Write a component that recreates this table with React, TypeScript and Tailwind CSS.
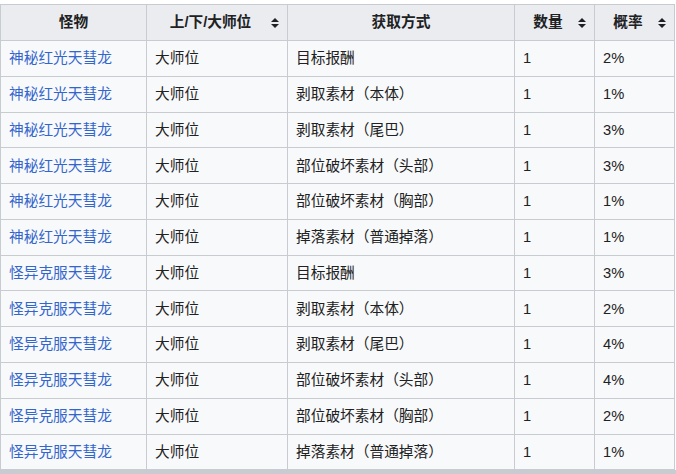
const rows: [string, string, string, string][] = [
  ["神秘红光天彗龙", "目标报酬", "1", "2%"],
  ["神秘红光天彗龙", "剥取素材（本体）", "1", "1%"],
  ["神秘红光天彗龙", "剥取素材（尾巴）", "1", "3%"],
  ["神秘红光天彗龙", "部位破坏素材（头部）", "1", "3%"],
  ["神秘红光天彗龙", "部位破坏素材（胸部）", "1", "1%"],
  ["神秘红光天彗龙", "掉落素材（普通掉落）", "1", "1%"],
  ["怪异克服天彗龙", "目标报酬", "1", "3%"],
  ["怪异克服天彗龙", "剥取素材（本体）", "1", "2%"],
  ["怪异克服天彗龙", "剥取素材（尾巴）", "1", "4%"],
  ["怪异克服天彗龙", "部位破坏素材（头部）", "1", "4%"],
  ["怪异克服天彗龙", "部位破坏素材（胸部）", "1", "2%"],
  ["怪异克服天彗龙", "掉落素材（普通掉落）", "1", "1%"],
];

function SortIcon() {
  return (
    <svg width="8" height="10" viewBox="0 0 8 10" className="absolute right-[8px] top-1/2 -translate-y-1/2">
      <path d="M4 0 L8 4 L0 4 Z" fill="#202122" />
      <path d="M0 6 L8 6 L4 10 Z" fill="#202122" />
    </svg>
  );
}

const th = "relative border border-[#c8ccd1] bg-[#eaecf0] font-bold text-center h-[36px] py-0";
const td = "border border-[#c8ccd1] px-[8px] py-[6.2px] leading-[22.4px] align-middle";

export default function App() {
  return (
    <div
      className="w-[676px] h-[474px] overflow-hidden bg-white pt-[4px] text-[14.7px] text-[#202122]"
      style={{ fontFamily: '"Liberation Sans", "Noto Sans CJK SC", sans-serif' }}
    >
      <table className="table-fixed border-collapse bg-[#f8f9fa] w-[675px]">
        <colgroup>
          <col className="w-[146px]" />
          <col className="w-[141px]" />
          <col className="w-[227px]" />
          <col className="w-[80px]" />
          <col className="w-[80px]" />
        </colgroup>
        <thead>
          <tr>
            <th className={`${th} px-[8px]`}>怪物</th>
            <th className={`${th} pl-[8px] pr-[21px]`}>
              上/下/大师位
              <SortIcon />
            </th>
            <th className={`${th} px-[8px]`}>获取方式</th>
            <th className={`${th} pl-[8px] pr-[21px]`}>
              数量
              <SortIcon />
            </th>
            <th className={`${th} pl-[8px] pr-[21px]`}>
              概率
              <SortIcon />
            </th>
          </tr>
        </thead>
        <tbody>
          {rows.map((r, i) => (
            <tr key={i}>
              <td className={`${td} text-[#3366cc]`}>{r[0]}</td>
              <td className={td}>大师位</td>
              <td className={td}>{r[1]}</td>
              <td className={td}>{r[2]}</td>
              <td className={td}>{r[3]}</td>
            </tr>
          ))}
        </tbody>
      </table>
      <div className="h-[8px] bg-[#c8ccd1]" />
    </div>
  );
}
